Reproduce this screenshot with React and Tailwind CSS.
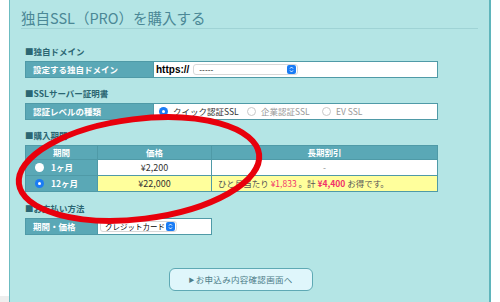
import React from "react";

const F = { fontFamily: '"Noto Sans CJK JP", "Noto Sans", sans-serif' };

function Radio({ on, white }) {
  if (on)
    return (
      <span className="inline-flex items-center justify-center w-[9px] h-[9px] rounded-full bg-[#1a7cf5] mr-[5px]">
        <span className="w-[3px] h-[3px] rounded-full bg-white" />
      </span>
    );
  return (
    <span
      className={`inline-block w-[9px] h-[9px] rounded-full mr-[5px] ${
        white ? "bg-white" : "bg-white border border-[#c8c8c8]"
      }`}
    />
  );
}

function SelArrow() {
  return (
    <span className="inline-flex flex-col items-center justify-center w-[9px] h-[9px] rounded-[2px] bg-[#1a7cf5]">
      <svg width="5" height="7" viewBox="0 0 5 7">
        <path d="M1 2.6 L2.5 1 L4 2.6 M1 4.4 L2.5 6 L4 4.4" stroke="white" strokeWidth="0.9" fill="none" />
      </svg>
    </span>
  );
}

function Heading({ children }) {
  return (
    <div className="text-[8.5px] font-bold text-[#2b6672] leading-none h-[11px] flex items-center">
      ■{children}
    </div>
  );
}

export default function App() {
  return (
    <div className="w-[500px] h-[302px] flex bg-white overflow-hidden relative" style={F}>
      <div className="w-[9px] h-full flex flex-col justify-end">
        <div className="h-[6px] bg-[#eeeeee]" />
      </div>
      <div className="w-[482px] h-full bg-[#b4e5e5] border-l border-[#6cbcc1] border-r-2 border-r-[#5fb5bb] flex flex-col">
        <div className="pl-[11px] pr-[11px]">
          <div className="h-[29px] flex items-end pb-[3px] text-[14.5px] text-[#4b8896] leading-none border-b border-[#9fd3d5]">
            独自SSL（PRO）を購入する
          </div>
        </div>
        <div className="pl-[15px] flex flex-col">
          {/* domain */}
          <div className="mt-[17px]">
            <Heading>独自ドメイン</Heading>
          </div>
          <div className="mt-[4px] w-[413px] h-[17px] flex border border-[#4f9aa7] bg-white">
            <div className="w-[128px] bg-[#5aa8b6] text-white text-[8.5px] font-bold flex items-center pl-[7px] border-r border-[#4f9aa7]">
              設定する独自ドメイン
            </div>
            <div className="flex items-center pl-[2px]">
              <span className="text-[10px] font-bold text-black" style={{ fontFamily: '"Liberation Sans", sans-serif' }}>
                https://
              </span>
              <span className="ml-[4px] w-[105px] h-[11px] border border-[#d8d8d8] rounded-[3px] flex items-center justify-between pl-[5px] pr-[1px] text-[8px] text-black leading-none">
                -----
                <SelArrow />
              </span>
            </div>
          </div>
          {/* ssl */}
          <div className="mt-[10px]">
            <Heading>SSLサーバー証明書</Heading>
          </div>
          <div className="mt-[4px] w-[413px] h-[17px] flex border border-[#4f9aa7] bg-white">
            <div className="w-[128px] bg-[#5aa8b6] text-white text-[8.5px] font-bold flex items-center pl-[7px] border-r border-[#4f9aa7]">
              認証レベルの種類
            </div>
            <div className="flex items-center pl-[5px] text-[8.5px] leading-none">
              <Radio on />
              <span className="text-[#333] w-[74px]">クイック認証SSL</span>
              <Radio />
              <span className="text-[#999] w-[61px]">企業認証SSL</span>
              <Radio />
              <span className="text-[#999]">EV SSL</span>
            </div>
          </div>
          {/* period */}
          <div className="mt-[10px]">
            <Heading>購入期間</Heading>
          </div>
          <div className="mt-[4px] w-[413px] flex flex-col border border-[#4f9aa7] text-[8.5px] leading-none">
            <div className="h-[14px] flex bg-[#5aa8b6] text-white font-bold border-b border-[#4f9aa7]">
              <div className="w-[72px] flex items-center justify-center border-r border-[#4f9aa7]">期間</div>
              <div className="w-[114px] flex items-center justify-center border-r border-[#4f9aa7]">価格</div>
              <div className="flex-1 flex items-center justify-center">長期割引</div>
            </div>
            <div className="h-[16px] flex border-b border-[#4f9aa7]">
              <div className="w-[72px] bg-[#5aa8b6] text-white font-bold flex items-center pl-[9px] border-r border-[#4f9aa7]">
                <Radio white />
                <span className="ml-[2px]">1ヶ月</span>
              </div>
              <div className="w-[114px] bg-white flex items-center justify-center text-[#333] text-[9px] border-r border-[#4f9aa7]">
                ¥2,200
              </div>
              <div className="flex-1 bg-white flex items-center justify-center text-[#888]">-</div>
            </div>
            <div className="h-[15px] flex">
              <div className="w-[72px] bg-[#5aa8b6] text-white font-bold flex items-center pl-[9px] border-r border-[#4f9aa7]">
                <Radio on />
                <span className="ml-[2px]">12ヶ月</span>
              </div>
              <div className="w-[114px] bg-[#ffff9c] flex items-center justify-center text-[#333] text-[9px] border-r border-[#4f9aa7]">
                ¥22,000
              </div>
              <div className="flex-1 bg-[#ffff9c] flex items-center pl-[6px] text-[#555] whitespace-nowrap">
                ひと月当たり&nbsp;<span className="text-[#f0306a]">¥1,833</span>&nbsp;。計&nbsp;
                <span className="text-[#f0306a] font-bold">¥4,400</span>&nbsp;お得です。
              </div>
            </div>
          </div>
          {/* payment */}
          <div className="mt-[11px]">
            <Heading>お支払い方法</Heading>
          </div>
          <div className="mt-[4px] w-[187px] h-[17px] flex border border-[#4f9aa7] bg-white">
            <div className="w-[72px] bg-[#5aa8b6] text-white text-[8.5px] font-bold flex items-center pl-[7px] border-r border-[#4f9aa7]">
              期間・価格
            </div>
            <div className="flex items-center pl-[2px]">
              <span className="h-[11px] w-[77px] border border-[#d8d8d8] rounded-[3px] flex items-center justify-between pl-[4px] pr-[1px] text-[7.5px] text-black leading-none">
                クレジットカード
                <SelArrow />
              </span>
            </div>
          </div>
        </div>
        <div className="flex justify-center mt-[33px] pr-[20px]">
          <div className="ml-[2px] w-[144px] h-[23px] rounded-[6px] border border-[#5ea9b4] bg-[#dff6fb] flex items-center justify-center text-[8.5px] text-[#4d7d88] tracking-[0.3px]">
            <span className="text-[6px] mr-[1px]">▶</span>お申込み内容確認画面へ
          </div>
        </div>
      </div>
      <div className="flex-1" />
      <svg className="absolute left-0 top-0 pointer-events-none" width="500" height="302">
        <ellipse cx="139" cy="169" rx="121" ry="50" transform="rotate(-7 139 169)" fill="none" stroke="#e8000c" strokeWidth="6" />
      </svg>
    </div>
  );
}
